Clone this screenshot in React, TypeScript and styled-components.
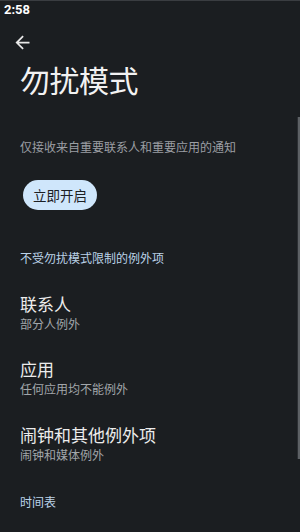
import React from "react";
import styled, { createGlobalStyle } from "styled-components";

const Global = createGlobalStyle`
  html, body { margin: 0; padding: 0; background: #1b1e21; }
  body { width: 300px; height: 532px; overflow: hidden; }
  * { box-sizing: border-box; }
`;

const Screen = styled.div`
  position: relative;
  width: 300px;
  height: 532px;
  background: #1b1e21;
  font-family: "Noto Sans CJK SC", "Noto Sans", sans-serif;
  color: #e8e8e8;
  display: flex;
  flex-direction: column;
  overflow: hidden;
`;

const StatusBar = styled.div`
  height: 18px;
  border-top: 1px solid #3a3d41;
  padding: 1px 0 0 4px;
  font-family: Roboto, "Liberation Sans", sans-serif;
  font-weight: 700;
  font-size: 13px;
  line-height: 15px;
  color: #ffffff;
`;

const Toolbar = styled.div`
  height: 46px;
  display: flex;
  align-items: flex-start;
  padding: 14px 0 0 12px;
`;

const BackIcon = styled.svg`
  width: 21px;
  height: 21px;
  fill: #e8e8e8;
`;

const Title = styled.h1`
  margin: 0;
  padding-left: 20px;
  font-size: 30px;
  line-height: 30px;
  font-weight: 400;
  color: #f2f2f2;
  letter-spacing: -0.5px;
`;

const Description = styled.p`
  margin: 47px 0 0;
  padding-left: 20px;
  font-size: 12px;
  line-height: 12px;
  color: #9b9fa4;
`;

const ButtonRow = styled.div`
  padding: 27px 0 0 23px;
`;

const PillButton = styled.button`
  height: 30px;
  width: 74px;
  border: none;
  border-radius: 15px;
  background: #cfe6fb;
  color: #1c2024;
  font-family: "Noto Sans CJK SC", sans-serif;
  font-size: 13.5px;
  padding: 0;
  display: flex;
  align-items: center;
  justify-content: center;
`;

const SectionHeader = styled.div<{ $top: number }>`
  margin-top: ${(p) => p.$top}px;
  padding-left: 20px;
  font-size: 12px;
  line-height: 12px;
  color: #bcd3e8;
`;

const Item = styled.div<{ $top: number }>`
  margin-top: ${(p) => p.$top}px;
  padding-left: 20px;
  display: flex;
  flex-direction: column;
  gap: 6px;
`;

const ItemTitle = styled.div`
  font-size: 17px;
  line-height: 17px;
  color: #ececec;
`;

const ItemSub = styled.div`
  font-size: 12px;
  line-height: 12px;
  color: #a2a6aa;
`;

const Scrollbar = styled.div`
  position: absolute;
  right: 0;
  top: 117px;
  width: 3px;
  height: 342px;
  background: #5d6165;
  border-left: 1px solid #2c2f33;
`;

const items = [
  { title: "联系人", sub: "部分人例外", top: 31 },
  { title: "应用", sub: "任何应用均不能例外", top: 30 },
  { title: "闹钟和其他例外项", sub: "闹钟和媒体例外", top: 31 },
];

export default function App() {
  return (
    <>
      <Global />
      <Screen>
        <StatusBar>2:58</StatusBar>
        <Toolbar>
          <BackIcon viewBox="0 0 24 24">
            <path d="M20 11H7.83l5.59-5.59L12 4l-8 8 8 8 1.41-1.41L7.83 13H20v-2z" />
          </BackIcon>
        </Toolbar>
        <Title>勿扰模式</Title>
        <Description>仅接收来自重要联系人和重要应用的通知</Description>
        <ButtonRow>
          <PillButton>立即开启</PillButton>
        </ButtonRow>
        <SectionHeader $top={42}>不受勿扰模式限制的例外项</SectionHeader>
        {items.map((it) => (
          <Item key={it.title} $top={it.top}>
            <ItemTitle>{it.title}</ItemTitle>
            <ItemSub>{it.sub}</ItemSub>
          </Item>
        ))}
        <SectionHeader $top={35}>时间表</SectionHeader>
        <Scrollbar />
      </Screen>
    </>
  );
}
